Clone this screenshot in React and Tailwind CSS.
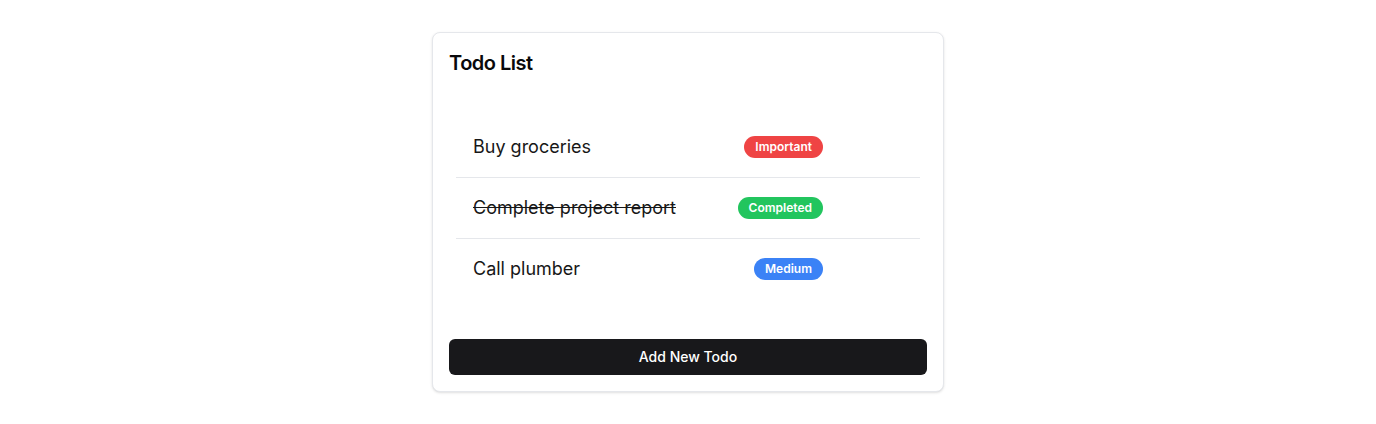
import React from 'react';

const TODOS = [
    { id: 1, title: 'Buy groceries', tag: 'Important', done: false },
    { id: 2, title: 'Complete project report', tag: 'Completed', done: true },
    { id: 3, title: 'Call plumber', tag: 'Medium', done: false },
];

const TAG_STYLES = {
    Important: 'bg-[#ef4444]',
    Completed: 'bg-[#22c55e]',
    Medium: 'bg-[#3b82f6]',
};

export default function App() {
    return (
        <div className="min-h-screen bg-white pt-8 font-['Inter',sans-serif] text-[#09090b]">
            <div className="mx-auto w-[512px] rounded-lg border border-gray-200 bg-white p-4 shadow-sm">
                <h1 className="text-xl font-semibold leading-7 tracking-tight">
                    Todo List
                </h1>

                <ul className="mx-[7px] mt-10 mb-10 divide-y divide-gray-200">
                    {TODOS.map((t) => (
                        <li
                            key={t.id}
                            className="flex items-center py-4 pl-[17px] pr-4"
                        >
                            <span
                                className={
                                    t.done
                                        ? 'flex-1 text-lg leading-7 text-[#171717] line-through'
                                        : 'flex-1 text-lg leading-7 text-[#171717]'
                                }
                            >
                                {t.title}
                            </span>
                            <span
                                className={`${TAG_STYLES[t.tag]} rounded-full px-[11px] py-[3px] text-xs font-semibold leading-4 text-white`}
                            >
                                {t.tag}
                            </span>
                            <span className="w-[81px]" />
                        </li>
                    ))}
                </ul>

                <button className="h-9 w-full rounded-md bg-[#18181b] text-sm font-medium text-white">
                    Add New Todo
                </button>
            </div>
        </div>
    );
}
